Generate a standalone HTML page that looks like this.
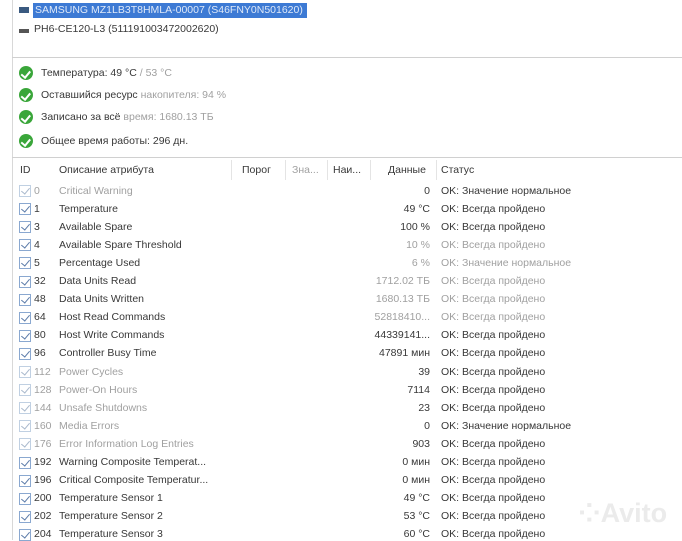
<!DOCTYPE html>
<html><head><meta charset="utf-8"><style>
*{margin:0;padding:0;box-sizing:border-box}
body{width:682px;height:540px;overflow:hidden;background:#fff;font-family:"Liberation Sans","DejaVu Sans",sans-serif;font-size:10.5px;color:#383838;position:relative}
.a{position:absolute;white-space:nowrap}
.g{color:#a0a0a0}
.ok{position:absolute;left:19px;width:14px;height:14px;border-radius:50%;background:#3aa63a}
.ok:after{content:"";position:absolute;left:4px;top:2.5px;width:3.5px;height:6.5px;border:solid #fff;border-width:0 2px 2px 0;transform:rotate(40deg)}
.cb{position:absolute;left:19px;width:12px;height:12px;border:1px solid #8aa8d0;background:#fff}
.cb:after{content:"";position:absolute;left:3px;top:0px;width:4px;height:7px;border:solid #5a7aa8;border-width:0 1.3px 1.3px 0;transform:rotate(40deg)}
.cb.l{border-color:#c0d0e2}.cb.l:after{border-color:#a8b8cc}
.r{position:absolute;right:252px;text-align:right;white-space:nowrap}
</style></head><body>
<div class="a" style="left:12px;top:0;width:1px;height:540px;background:#d8d8d8"></div>
<div class="a" style="left:12px;top:57px;width:670px;height:1px;background:#d0d0d0"></div>
<div class="a" style="left:12px;top:157px;width:670px;height:1px;background:#d0d0d0"></div>
<div class="a" style="left:19px;top:7px;width:10px;height:6px;background:#3a5a80"></div>
<div class="a" style="left:33px;top:3px;width:274px;height:15px;background:#3d7ad4"></div>
<div class="a" style="left:35px;top:4px;color:#dfe9f8">SAMSUNG MZ1LB3T8HMLA-00007 (S46FNY0N501620)</div>
<div class="a" style="left:19px;top:29px;width:10px;height:4px;background:#555"></div>
<div class="a" style="left:34px;top:23px">PH6-CE120-L3 (511191003472002620)</div>
<div class="ok" style="top:66px"></div><div class="a" style="left:41px;top:67px">Температура: 49 °C <span class="g">/ 53 °C</span></div>
<div class="ok" style="top:88px"></div><div class="a" style="left:41px;top:89px">Оставшийся ресурс <span class="g">накопителя: 94 %</span></div>
<div class="ok" style="top:110px"></div><div class="a" style="left:41px;top:111px">Записано за всё <span class="g">время: 1680.13 ТБ</span></div>
<div class="ok" style="top:134px"></div><div class="a" style="left:41px;top:135px">Общее время работы: 296 дн.</div>
<div class="a" style="left:231px;top:160px;width:1px;height:20px;background:#e4e4e4"></div>
<div class="a" style="left:285px;top:160px;width:1px;height:20px;background:#e4e4e4"></div>
<div class="a" style="left:327px;top:160px;width:1px;height:20px;background:#e4e4e4"></div>
<div class="a" style="left:370px;top:160px;width:1px;height:20px;background:#e4e4e4"></div>
<div class="a" style="left:436px;top:160px;width:1px;height:20px;background:#e4e4e4"></div>
<div class="a" style="left:20px;top:164px">ID</div>
<div class="a" style="left:59px;top:164px">Описание атрибута</div>
<div class="a" style="left:242px;top:164px">Порог</div>
<div class="a g" style="left:292px;top:164px">Зна...</div>
<div class="a" style="left:333px;top:164px">Наи...</div>
<div class="a" style="left:388px;top:164px">Данные</div>
<div class="a" style="left:441px;top:164px">Статус</div>
<div id="rows"></div>
<div class="a" style="left:578px;top:498px;font-size:27px;color:#ebebeb;font-weight:bold">⁘Avito</div>
<script>
var d=[["0","Critical Warning","0","OK: Значение нормальное",1,0],["1","Temperature","49 °C","OK: Всегда пройдено",0,0],["3","Available Spare","100 %","OK: Всегда пройдено",0,0],["4","Available Spare Threshold","10 %","OK: Всегда пройдено",0,1],["5","Percentage Used","6 %","OK: Значение нормальное",0,1],["32","Data Units Read","1712.02 ТБ","OK: Всегда пройдено",0,1],["48","Data Units Written","1680.13 ТБ","OK: Всегда пройдено",0,1],["64","Host Read Commands","52818410...","OK: Всегда пройдено",0,1],["80","Host Write Commands","44339141...","OK: Всегда пройдено",0,0],["96","Controller Busy Time","47891 мин","OK: Всегда пройдено",0,0],["112","Power Cycles","39","OK: Всегда пройдено",1,0],["128","Power-On Hours","7114","OK: Всегда пройдено",1,0],["144","Unsafe Shutdowns","23","OK: Всегда пройдено",1,0],["160","Media Errors","0","OK: Значение нормальное",1,0],["176","Error Information Log Entries","903","OK: Всегда пройдено",1,0],["192","Warning Composite Temperat...","0 мин","OK: Всегда пройдено",0,0],["196","Critical Composite Temperatur...","0 мин","OK: Всегда пройдено",0,0],["200","Temperature Sensor 1","49 °C","OK: Всегда пройдено",0,0],["202","Temperature Sensor 2","53 °C","OK: Всегда пройдено",0,0],["204","Temperature Sensor 3","60 °C","OK: Всегда пройдено",0,0]];
var h="";d.forEach(function(r,i){var y=184.5+i*18.1;var g=r[4]?' g':'';var g2=r[5]?' g':'';
h+='<div class="cb'+(r[4]?' l':'')+'" style="top:'+(y+0.5)+'px"></div><div class="a'+g+'" style="left:34px;top:'+y+'px">'+r[0]+'</div><div class="a'+g+'" style="left:59px;top:'+y+'px">'+r[1]+'</div><div class="r'+g2+'" style="top:'+y+'px">'+r[2]+'</div><div class="a'+g2+'" style="left:441px;top:'+y+'px">'+r[3]+'</div>';});
document.getElementById("rows").innerHTML=h;
</script>
</body></html>
